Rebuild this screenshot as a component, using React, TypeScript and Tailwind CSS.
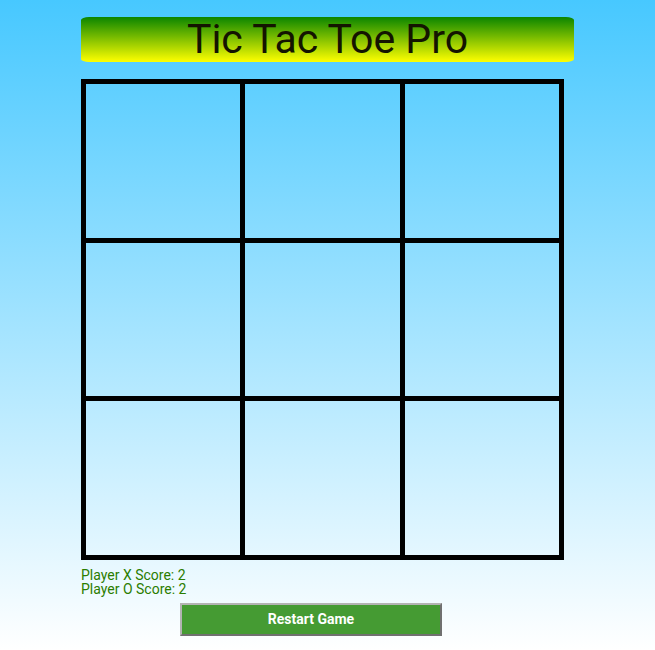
export default function App() {
  const cells = Array.from({ length: 9 });

  return (
    <div className="min-h-[650px] w-full bg-[linear-gradient(to_bottom,#47c8ff,#ffffff)] font-['Roboto',sans-serif]">
      <div className="ml-[81px] w-[493px] pt-[17px]">
        <h1 className="flex h-[45px] items-center justify-center rounded-[8px/3px] bg-[linear-gradient(to_bottom,#0b8500,#ffff00)] text-[41px] leading-none font-normal text-[#141400]">
          Tic Tac Toe Pro
        </h1>
      </div>
      <div className="ml-[81px] mt-[17px] grid h-[481px] w-[483px] grid-cols-3 grid-rows-3 border-t-[5px] border-l-[5px] border-black">
        {cells.map((_, i) => (
          <div key={i} className="border-r-[5px] border-b-[5px] border-black" />
        ))}
      </div>
      <div className="ml-[81px] mt-[8px] text-[14px] leading-[14px] text-[#2b7d00]">
        <p>Player X Score: 2</p>
        <p>Player O Score: 2</p>
      </div>
      <div className="ml-[180px] mt-[7px]">
        <button
          type="button"
          className="h-[33px] w-[262px] border-2 border-t-[#b3b3b3] border-l-[#b3b3b3] border-r-[#707070] border-b-[#707070] bg-[#459b33] text-[14px] font-bold text-white"
        >
          Restart Game
        </button>
      </div>
    </div>
  );
}
